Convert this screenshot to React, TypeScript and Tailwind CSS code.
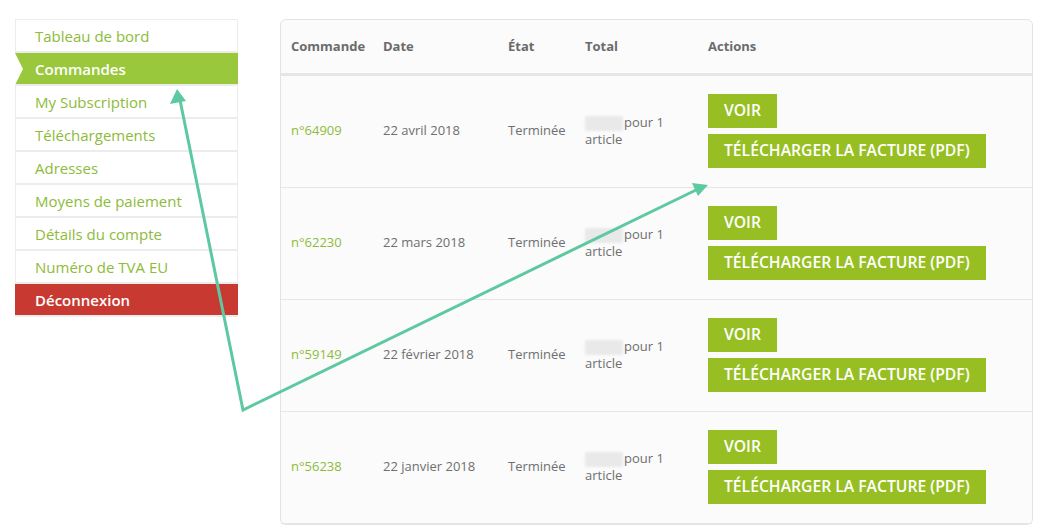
import React from "react";

const menu = [
  { label: "Tableau de bord" },
  { label: "Commandes", active: true },
  { label: "My Subscription" },
  { label: "Téléchargements" },
  { label: "Adresses" },
  { label: "Moyens de paiement" },
  { label: "Détails du compte" },
  { label: "Numéro de TVA EU" },
  { label: "Déconnexion", logout: true },
];

const orders = [
  { id: "n°64909", date: "22 avril 2018" },
  { id: "n°62230", date: "22 mars 2018" },
  { id: "n°59149", date: "22 février 2018" },
  { id: "n°56238", date: "22 janvier 2018" },
];

function Sidebar() {
  return (
    <nav className="w-[223px] shrink-0 mt-[19px] border-t border-[#ececec]">
      {menu.map((m) => {
        if (m.active) {
          return (
            <div
              key={m.label}
              className="relative h-[33px] bg-[#9ac83d] pl-5 pt-px flex items-center text-[15px] font-semibold text-white border-b-2 border-[#ececec]"
            >
              <span className="absolute left-0 top-1/2 -translate-y-1/2 w-0 h-0 border-y-[16px] border-y-transparent border-l-[8px] border-l-white" />
              {m.label}
            </div>
          );
        }
        if (m.logout) {
          return (
            <div
              key={m.label}
              className="h-[33px] bg-[#c83a31] pl-5 pt-px flex items-center text-[15px] font-semibold text-white border-b-2 border-[#ececec]"
            >
              {m.label}
            </div>
          );
        }
        return (
          <div
            key={m.label}
            className="h-[33px] bg-white pl-[19px] pt-px flex items-center text-[15px] text-[#8dbb3a] border-x border-b-2 border-[#ececec]"
          >
            {m.label}
          </div>
        );
      })}
    </nav>
  );
}

function OrderRow({ id, date }: { id: string; date: string }) {
  return (
    <div className="grid grid-cols-[92px_125px_77px_123px_1fr] items-center border-b border-[#e6e6e6] pt-[18px] pb-[19px] text-[13px] text-[#6f6f6f]">
      <div className="pl-[10px] text-[#8dbb3a]">{id}</div>
      <div className="pl-[10px]">{date}</div>
      <div className="pl-[10px]">Terminée</div>
      <div className="pl-[10px] leading-[17px] max-w-[96px]">
        <span className="inline-block w-[38px] h-[15px] align-middle bg-[#e9e9e9] blur-[1px] mr-[1px]" />
        pour 1 article
      </div>
      <div className="pl-[10px] flex flex-col items-start gap-[6px]">
        <button className="h-[34px] px-4 bg-[#97bf23] text-white text-[15.7px] font-semibold">VOIR</button>
        <button className="h-[34px] px-4 bg-[#97bf23] text-white text-[15.7px] font-semibold">
          TÉLÉCHARGER LA FACTURE (PDF)
        </button>
      </div>
    </div>
  );
}

function Arrows() {
  return (
    <svg className="absolute inset-0 pointer-events-none" width="1048" height="525">
      <g stroke="#5dc9a0" strokeWidth="3" fill="none" strokeLinecap="round">
        <polyline points="180,100 243,410 696,190" />
      </g>
      <polygon points="177,89 170,104 186,101" fill="#5dc9a0" />
      <polygon points="708,185 692,183 698,196" fill="#5dc9a0" />
    </svg>
  );
}

export default function App() {
  return (
    <div
      className="relative w-[1048px] h-[525px] overflow-hidden bg-white flex pl-[15px]"
      style={{ fontFamily: '"Open Sans", "Noto Sans", sans-serif' }}
    >
      <Sidebar />
      <main className="ml-[42px] mt-[19px] w-[753px] self-start rounded-[6px] border border-[#e3e3e3] bg-[#fbfbfb]">
        <div className="grid grid-cols-[92px_125px_77px_123px_1fr] items-center h-[56px] border-b-[3px] border-[#e6e6e6] text-[13px] font-bold text-[#6b6b6b]">
          <div className="pl-[10px]">Commande</div>
          <div className="pl-[10px]">Date</div>
          <div className="pl-[10px]">État</div>
          <div className="pl-[10px]">Total</div>
          <div className="pl-[10px]">Actions</div>
        </div>
        {orders.map((o) => (
          <OrderRow key={o.id} id={o.id} date={o.date} />
        ))}
      </main>
      <Arrows />
    </div>
  );
}
